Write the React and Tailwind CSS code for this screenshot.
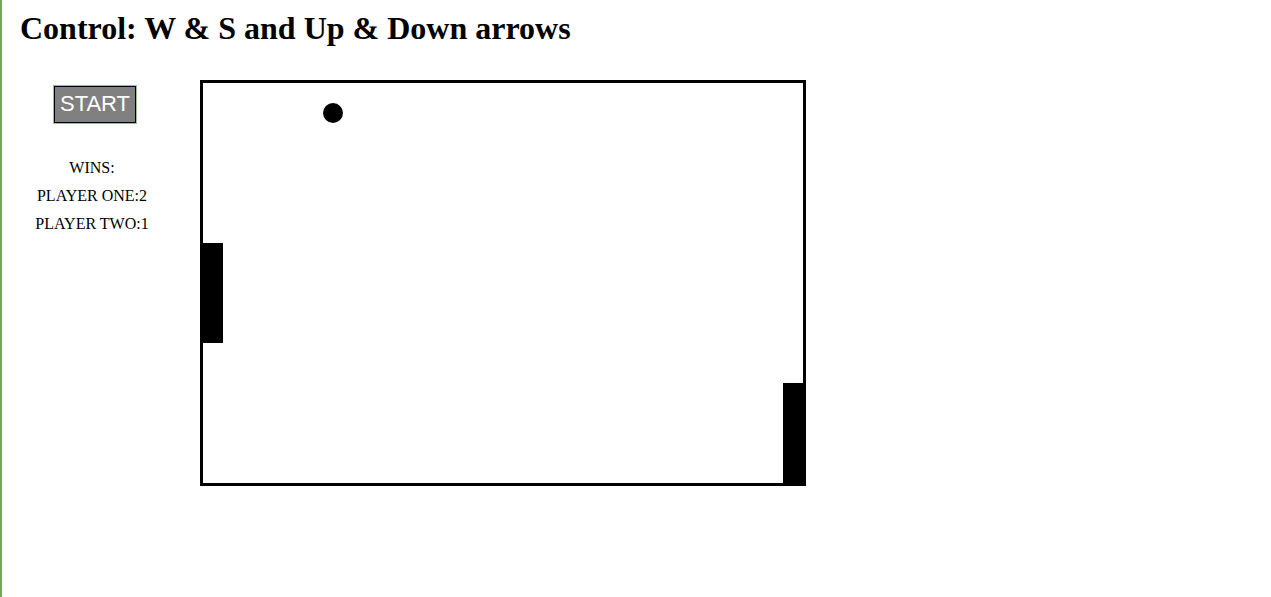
import React from "react";

const serif = { fontFamily: '"Liberation Serif", "Times New Roman", serif' };

function Scoreboard({ one, two }) {
    return (
        <div className="mt-[31px] flex flex-col items-center text-[16px] leading-[28px] text-black" style={serif}>
            <span>WINS:</span>
            <span>PLAYER ONE:{one}</span>
            <span>PLAYER TWO:{two}</span>
        </div>
    );
}

function Board() {
    return (
        <div className="relative box-content h-[400px] w-[600px] border-[3px] border-black bg-white">
            <div className="absolute left-0 top-[160px] h-[100px] w-[20px] bg-black" />
            <div className="absolute left-[580px] top-[300px] h-[100px] w-[20px] bg-black" />
            <div className="absolute left-[120px] top-[20px] h-[20px] w-[20px] rounded-full bg-black" />
        </div>
    );
}

export default function App() {
    return (
        <div className="min-h-[597px] border-l-2 border-[#78a54f] bg-white">
            <h1 className="pl-[18px] pt-[10px] text-[32px] font-bold leading-[36px] text-black" style={serif}>
                Control: W &amp; S and Up &amp; Down arrows
            </h1>
            <div className="mt-[34px] flex items-start gap-[18px]">
                <div className="flex w-[180px] flex-col items-center">
                    <button
                        className="ml-[6px] mt-[6px] h-[37px] w-[82px] border border-black bg-[#808080] pb-[1px] text-[22px] leading-none text-white ring-1 ring-[#9dbd8a]"
                        style={{ fontFamily: '"Liberation Sans", Arial, sans-serif' }}
                    >
                        START
                    </button>
                    <Scoreboard one={2} two={1} />
                </div>
                <Board />
            </div>
        </div>
    );
}
